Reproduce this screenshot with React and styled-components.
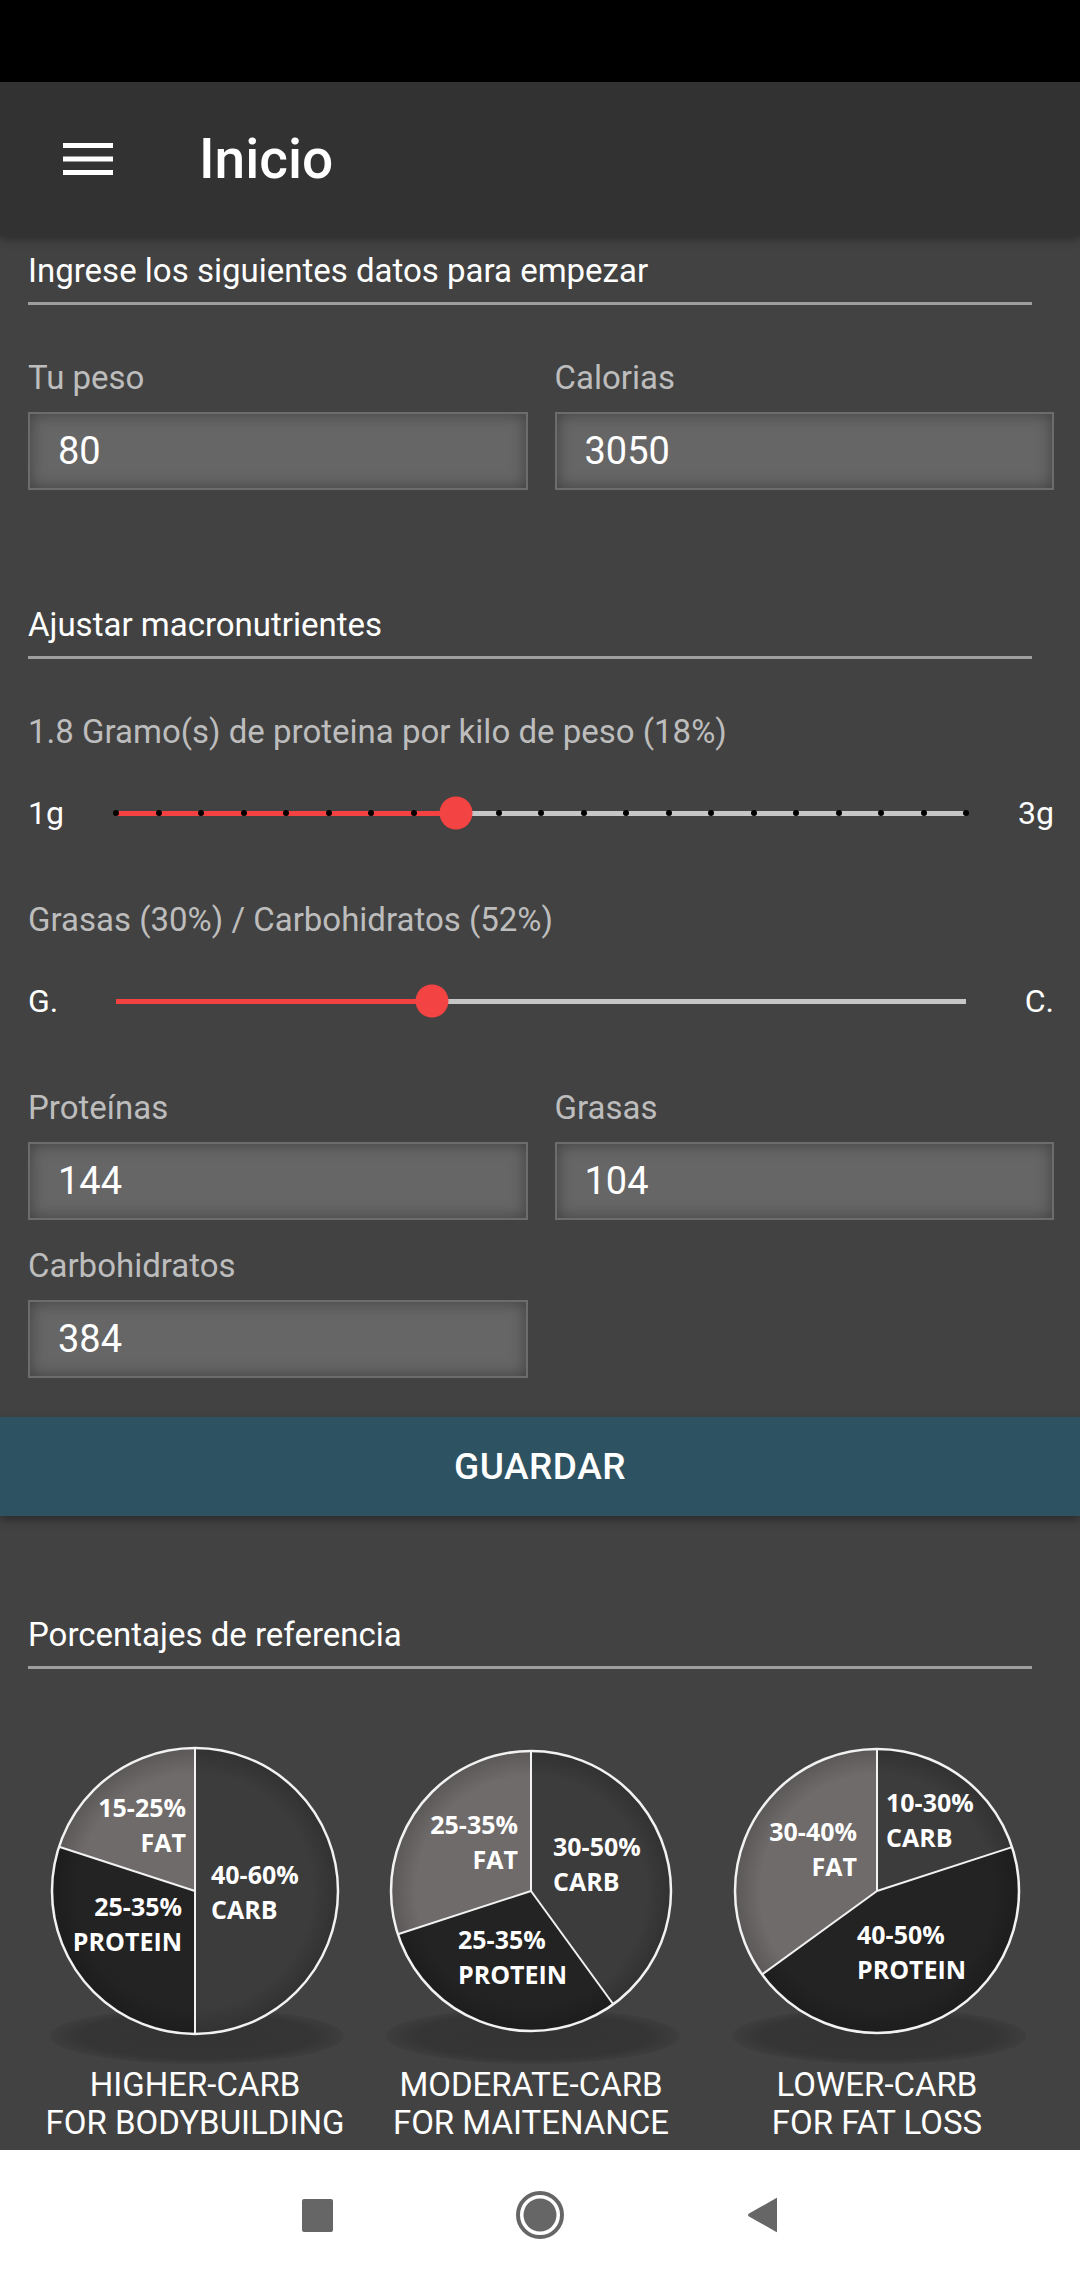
import styled, { createGlobalStyle } from "styled-components";

const GlobalStyle = createGlobalStyle`
  html, body {
    margin: 0;
    padding: 0;
    background: #424242;
  }
  body {
    font-family: Roboto, "Noto Sans", Arial, sans-serif;
  }
`;

const pies = [
  {
    width: 334,
    r: 143,
    slices: [
      { from: 0, to: 180, color: "#3c3c3c" },
      { from: 180, to: 288, color: "#232323" },
      { from: 288, to: 360, color: "#6f6b6b" },
    ],
    labels: [
      { dx: -9, dy: -74, anchor: "end", lines: ["15-25%", "FAT"] },
      { dx: 16, dy: -7, anchor: "start", lines: ["40-60%", "CARB"] },
      { dx: -13, dy: 25, anchor: "end", lines: ["25-35%", "PROTEIN"] },
    ],
    caption: ["HIGHER-CARB", "FOR BODYBUILDING"],
  },
  {
    width: 338,
    r: 140,
    slices: [
      { from: 0, to: 144, color: "#3c3c3c" },
      { from: 144, to: 252, color: "#232323" },
      { from: 252, to: 360, color: "#6f6b6b" },
    ],
    labels: [
      { dx: -13, dy: -57, anchor: "end", lines: ["25-35%", "FAT"] },
      { dx: 22, dy: -35, anchor: "start", lines: ["30-50%", "CARB"] },
      { dx: -73, dy: 58, anchor: "start", lines: ["25-35%", "PROTEIN"] },
    ],
    caption: ["MODERATE-CARB", "FOR MAITENANCE"],
  },
  {
    width: 354,
    r: 142,
    slices: [
      { from: 0, to: 72, color: "#3c3c3c" },
      { from: 72, to: 234, color: "#232323" },
      { from: 234, to: 360, color: "#6f6b6b" },
    ],
    labels: [
      { dx: 9, dy: -79, anchor: "start", lines: ["10-30%", "CARB"] },
      { dx: -20, dy: -50, anchor: "end", lines: ["30-40%", "FAT"] },
      { dx: -20, dy: 53, anchor: "start", lines: ["40-50%", "PROTEIN"] },
    ],
    caption: ["LOWER-CARB", "FOR FAT LOSS"],
  },
];

const PIE_H = 330;
const PIE_CY = 155;

const point = (cx, cy, r, deg) => {
  const a = (deg * Math.PI) / 180;
  return [cx + r * Math.sin(a), cy - r * Math.cos(a)];
};

const slicePath = (cx, cy, r, from, to) => {
  const [x0, y0] = point(cx, cy, r, from);
  const [x1, y1] = point(cx, cy, r, to);
  const large = to - from > 180 ? 1 : 0;
  return `M${cx} ${cy} L${x0} ${y0} A${r} ${r} 0 ${large} 1 ${x1} ${y1} Z`;
};

const MenuIcon = () => (
  <svg width="50" height="32" viewBox="0 0 50 32">
    <rect x="0" y="0" width="50" height="5" fill="#fff" />
    <rect x="0" y="13.5" width="50" height="5" fill="#fff" />
    <rect x="0" y="27" width="50" height="5" fill="#fff" />
  </svg>
);

const Slider = ({ left, right, value, steps }) => {
  const pct = `${value * 100}%`;
  return (
    <SliderRow>
      <EndLabel>{left}</EndLabel>
      <Track>
        <Fill style={{ width: pct }} />
        {steps ? (
          <Ticks>
            {Array.from({ length: steps + 1 }, (_, i) => (
              <Dot key={i} />
            ))}
          </Ticks>
        ) : null}
        <Thumb style={{ left: pct }} />
      </Track>
      <EndLabel $right>{right}</EndLabel>
    </SliderRow>
  );
};

const Field = ({ label, value }) => (
  <FieldBox>
    <Label>{label}</Label>
    <InputBox>{value}</InputBox>
  </FieldBox>
);

const Pie = ({ pie, idx }) => {
  const cx = pie.width / 2;
  return (
    <PieCard>
      <svg width={pie.width} height={PIE_H} viewBox={`0 0 ${pie.width} ${PIE_H}`}>
        <defs>
          <radialGradient id={`sh${idx}`} cx="50%" cy="50%" r="50%">
            <stop offset="0%" stopColor="#333" />
            <stop offset="80%" stopColor="#353535" />
            <stop offset="100%" stopColor="#3e3e3e" />
          </radialGradient>
          <radialGradient id={`rim${idx}`} cx="50%" cy="50%" r="50%">
            <stop offset="82%" stopColor="#000" stopOpacity="0" />
            <stop offset="100%" stopColor="#000" stopOpacity="0.18" />
          </radialGradient>
        </defs>
        <ellipse cx={cx + 2} cy={300} rx={147} ry={28} fill={`url(#sh${idx})`} />
        {pie.slices.map((s, i) => (
          <path key={i} d={slicePath(cx, PIE_CY, pie.r, s.from, s.to)} fill={s.color} />
        ))}
        <circle cx={cx} cy={PIE_CY} r={pie.r} fill={`url(#rim${idx})`} />
        {pie.slices.map((s, i) => {
          const [x, y] = point(cx, PIE_CY, pie.r, s.from);
          return <line key={i} x1={cx} y1={PIE_CY} x2={x} y2={y} stroke="#f2f2f2" strokeWidth="2" />;
        })}
        <circle cx={cx} cy={PIE_CY} r={pie.r} fill="none" stroke="#f2f2f2" strokeWidth="2.5" />
        {pie.labels.map((l, i) => (
          <PieText key={i} x={cx + l.dx} y={PIE_CY + l.dy} textAnchor={l.anchor}>
            <tspan x={cx + l.dx}>{l.lines[0]}</tspan>
            <tspan x={cx + l.dx} dy="35">
              {l.lines[1]}
            </tspan>
          </PieText>
        ))}
      </svg>
      <Caption>
        {pie.caption[0]}
        <br />
        {pie.caption[1]}
      </Caption>
    </PieCard>
  );
};

const App = () => {
  return (
    <Screen>
      <GlobalStyle />
      <StatusBar />
      <AppBar>
        <MenuIcon />
        <Title>Inicio</Title>
      </AppBar>
      <Content>
        <SectionTitle $top={17}>Ingrese los siguientes datos para empezar</SectionTitle>
        <FieldGrid $top={55}>
          <Field label="Tu peso" value="80" />
          <Field label="Calorias" value="3050" />
        </FieldGrid>

        <SectionTitle $top={117}>Ajustar macronutrientes</SectionTitle>
        <Label $top={55}>1.8 Gramo(s) de proteina por kilo de peso (18%)</Label>
        <Spacer $h={39} />
        <Slider left="1g" right="3g" value={0.4} steps={20} />
        <Label $top={65}>Grasas (30%) / Carbohidratos (52%)</Label>
        <Spacer $h={39} />
        <Slider left="G." right="C." value={0.372} />

        <FieldGrid $top={65}>
          <Field label="Proteínas" value="144" />
          <Field label="Grasas" value="104" />
          <Field label="Carbohidratos" value="384" />
        </FieldGrid>

        <SaveButton>GUARDAR</SaveButton>

        <SectionTitle $top={101}>Porcentajes de referencia</SectionTitle>
        <PieRow>
          {pies.map((p, i) => (
            <Pie key={i} pie={p} idx={i} />
          ))}
        </PieRow>
      </Content>
      <NavBar>
        <NavSquare />
        <svg width="48" height="48" viewBox="0 0 48 48">
          <circle cx="24" cy="24" r="22" fill="none" stroke="#666" strokeWidth="4" />
          <circle cx="24" cy="24" r="16.5" fill="#666" />
        </svg>
        <svg width="32" height="36" viewBox="0 0 32 36">
          <path
            d="M30 2 L30 34 Q30 36 28.5 34.5 L2 19.5 Q0 18 2 16.5 L28.5 1.5 Q30 0 30 2 Z"
            fill="#666"
          />
        </svg>
      </NavBar>
    </Screen>
  );
};

const Screen = styled.div`
  width: 1080px;
  height: 2280px;
  display: flex;
  flex-direction: column;
  overflow: hidden;
  background: #424242;
`;

const StatusBar = styled.div`
  height: 82px;
  flex-shrink: 0;
  background: #000;
`;

const AppBar = styled.header`
  height: 154px;
  flex-shrink: 0;
  display: flex;
  align-items: center;
  padding-left: 63px;
  background: #323232;
  box-shadow: 0 3px 9px rgba(0, 0, 0, 0.35);
  position: relative;
  z-index: 2;
`;

const Title = styled.h1`
  margin: 0 0 0 86px;
  color: #fff;
  font-size: 55px;
  font-weight: 500;
  line-height: 1;
`;

const Content = styled.main`
  flex: 1;
  min-height: 0;
  overflow: hidden;
  display: flex;
  flex-direction: column;
  padding: 0 26px 0 28px;
`;

const SectionTitle = styled.h2`
  margin: ${(p) => p.$top || 0}px 22px 0 0;
  padding-bottom: 13px;
  border-bottom: 3px solid #9e9e9e;
  color: #fff;
  font-size: 33px;
  font-weight: 400;
  line-height: 36px;
`;

const FieldGrid = styled.div`
  margin-top: ${(p) => p.$top || 0}px;
  display: grid;
  grid-template-columns: 1fr 1fr;
  column-gap: 27px;
  row-gap: 28px;
`;

const FieldBox = styled.div`
  display: flex;
  flex-direction: column;
  gap: 16px;
`;

const Label = styled.div`
  margin-top: ${(p) => p.$top || 0}px;
  color: #bdbdbd;
  font-size: 33px;
  line-height: 36px;
  white-space: nowrap;
`;

const InputBox = styled.div`
  height: 74px;
  box-sizing: content-box;
  display: flex;
  align-items: center;
  padding-left: 28px;
  border: 2px solid #6c6c6c;
  background: #666;
  box-shadow: inset 0 0 16px rgba(0, 0, 0, 0.38);
  color: #fff;
  font-size: 38px;
`;

const Spacer = styled.div`
  height: ${(p) => p.$h}px;
  flex-shrink: 0;
`;

const SliderRow = styled.div`
  height: 48px;
  display: grid;
  grid-template-columns: 88px 1fr 88px;
  align-items: center;
`;

const EndLabel = styled.span`
  color: #fff;
  font-size: 32px;
  text-align: ${(p) => (p.$right ? "right" : "left")};
`;

const Track = styled.div`
  position: relative;
  height: 5px;
  background: #c6c6c6;
`;

const Fill = styled.div`
  position: absolute;
  left: 0;
  top: 0;
  bottom: 0;
  background: #f44242;
`;

const Ticks = styled.div`
  position: absolute;
  left: -3px;
  right: -3px;
  top: -0.5px;
  display: flex;
  justify-content: space-between;
`;

const Dot = styled.span`
  width: 6px;
  height: 6px;
  border-radius: 50%;
  background: #000;
`;

const Thumb = styled.div`
  position: absolute;
  top: 50%;
  width: 33px;
  height: 33px;
  border-radius: 50%;
  background: #f44343;
  transform: translate(-50%, -50%);
`;

const SaveButton = styled.button`
  margin: 39px -26px 0 -28px;
  height: 99px;
  flex-shrink: 0;
  border: none;
  background: #2d5262;
  color: #fff;
  font-family: Roboto, "Noto Sans", Arial, sans-serif;
  font-size: 37px;
  font-weight: 500;
  letter-spacing: 0.5px;
  box-shadow: 0 4px 9px rgba(0, 0, 0, 0.35);
`;

const PieRow = styled.div`
  margin-top: 67px;
  display: grid;
  grid-template-columns: 334px 338px 1fr;
`;

const PieCard = styled.figure`
  margin: 0;
  display: flex;
  flex-direction: column;
  align-items: center;
`;

const PieText = styled.text`
  font-family: "Open Sans", "DejaVu Sans", sans-serif;
  font-weight: 700;
  font-size: 25px;
  fill: #fff;
`;

const Caption = styled.figcaption`
  color: #fff;
  font-size: 33px;
  line-height: 38px;
  text-align: center;
  white-space: nowrap;
`;

const NavBar = styled.nav`
  height: 130px;
  flex-shrink: 0;
  display: flex;
  align-items: center;
  justify-content: center;
  gap: 183px;
  background: #fff;
  position: relative;
  z-index: 2;
`;

const NavSquare = styled.span`
  width: 31px;
  height: 33px;
  border-radius: 2px;
  background: #666;
`;

export default App;
